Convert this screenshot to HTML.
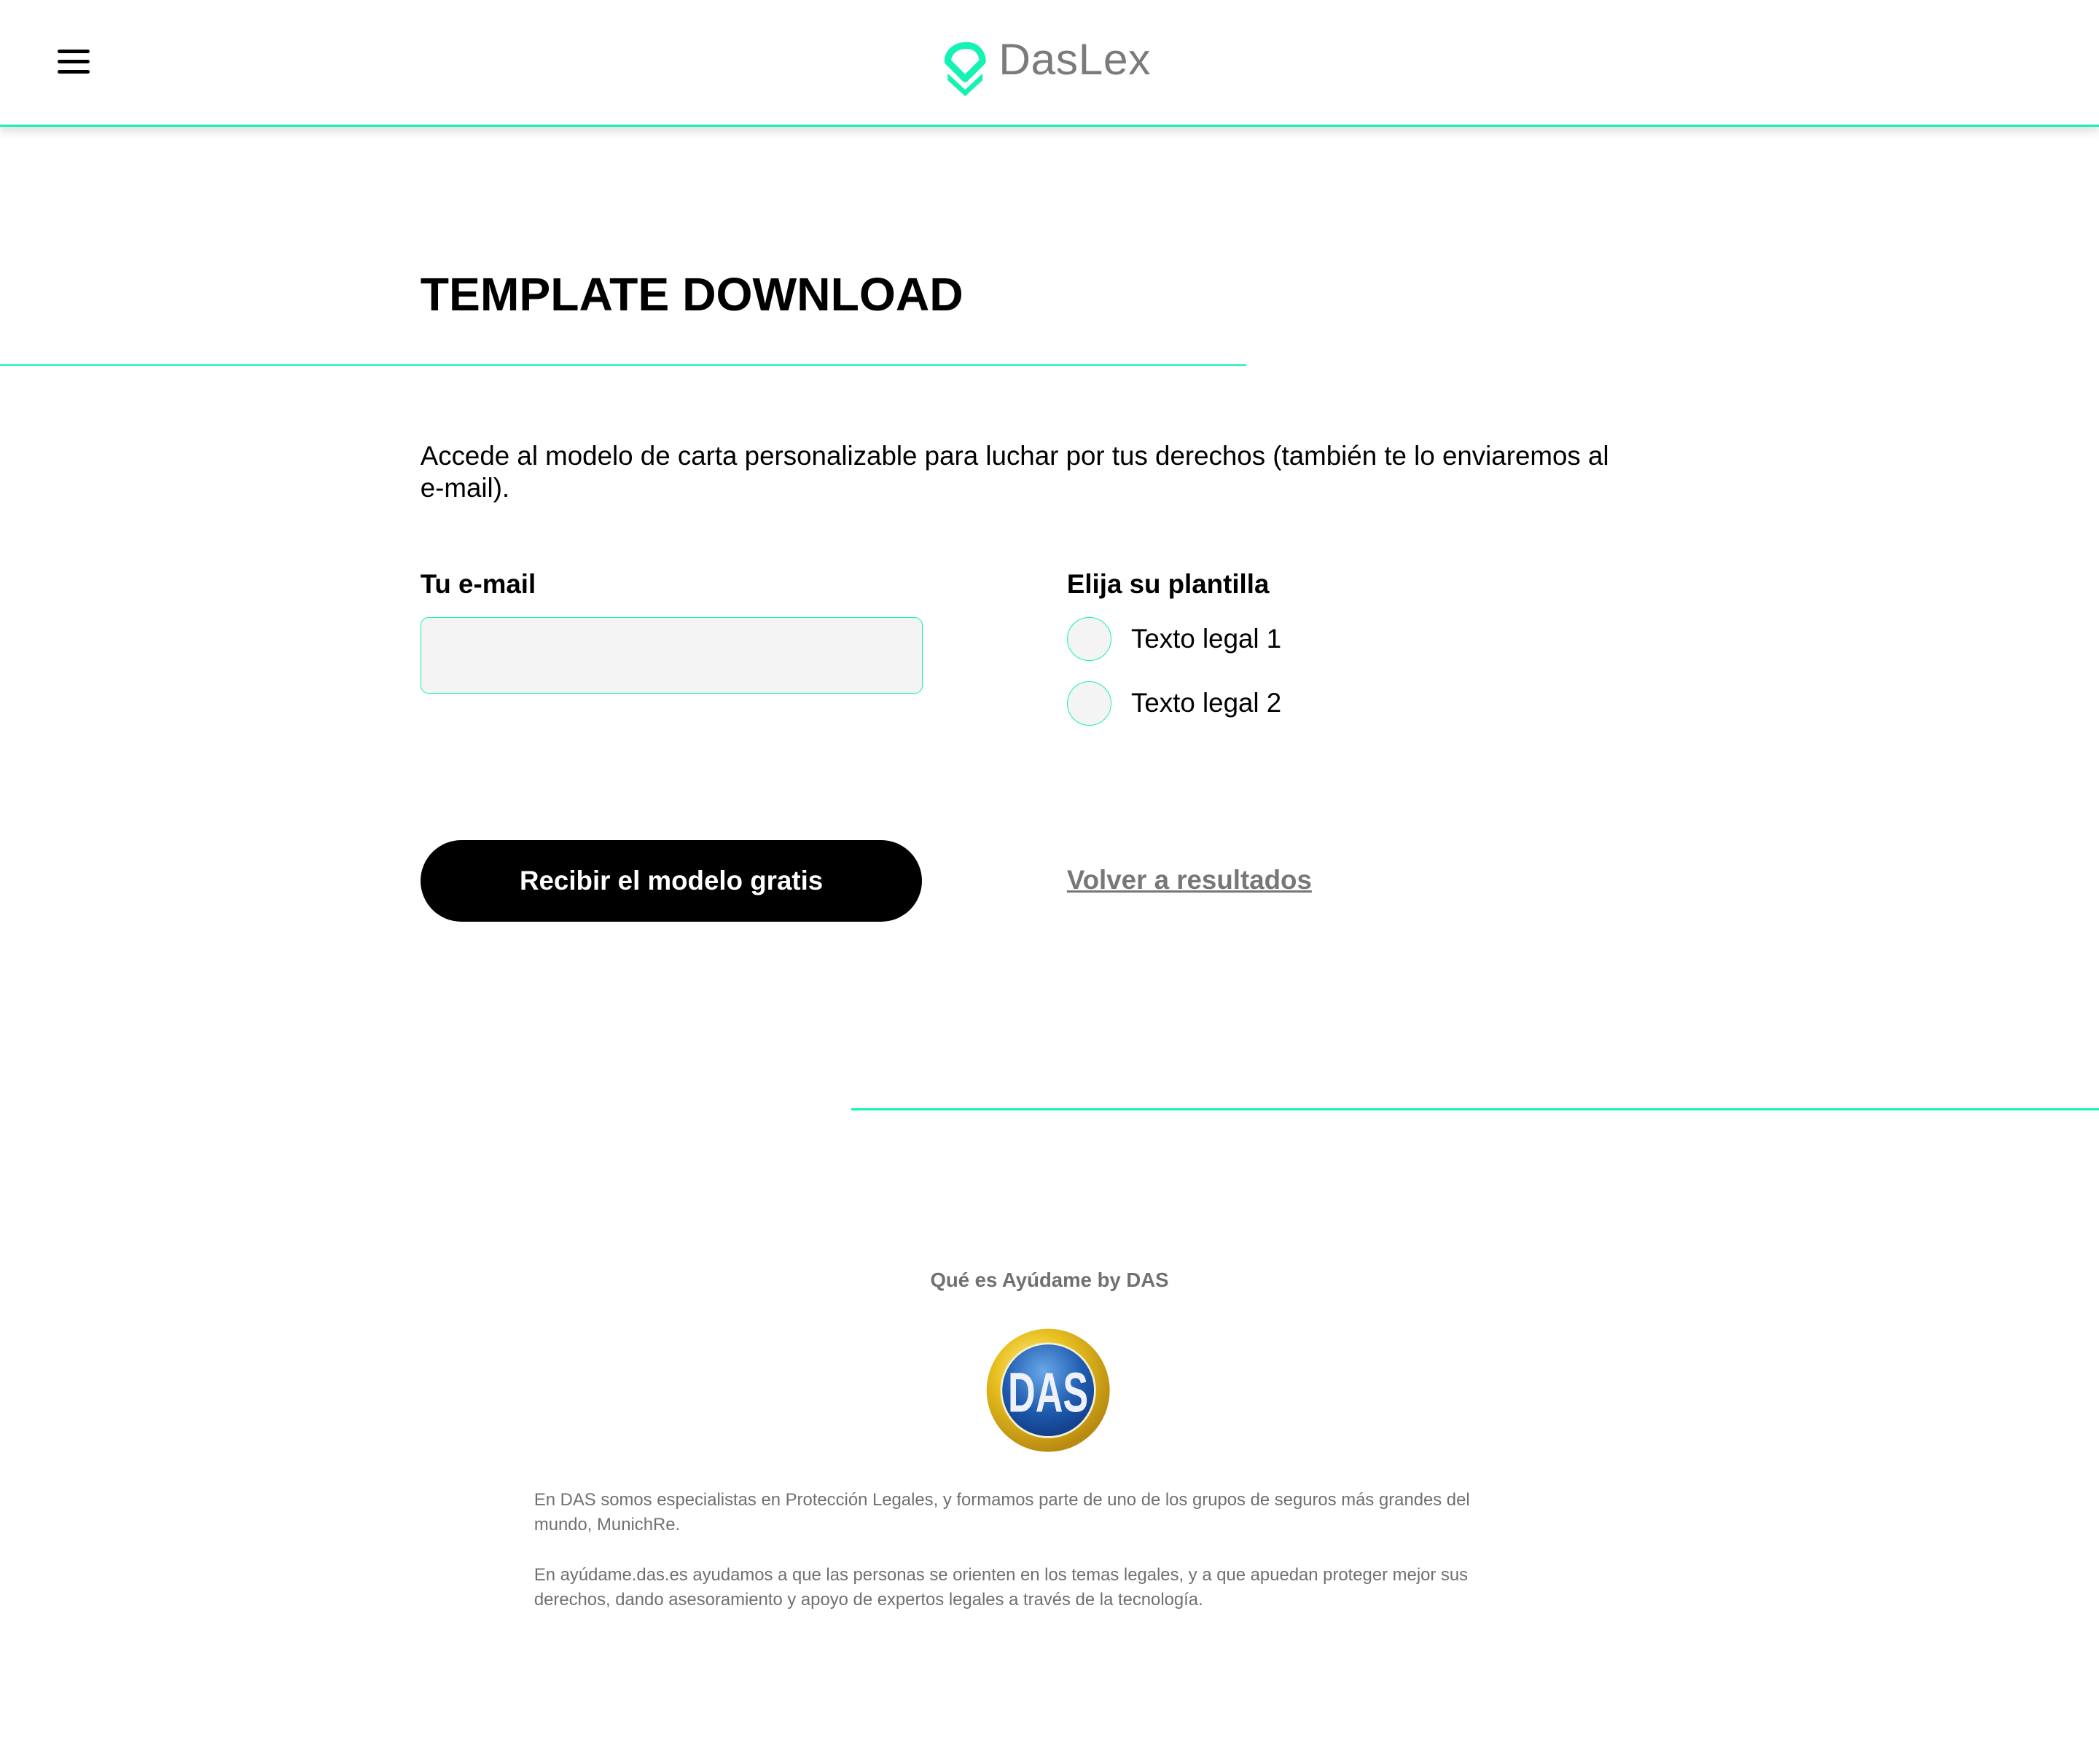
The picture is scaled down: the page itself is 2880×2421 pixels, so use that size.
<!DOCTYPE html>
<html><head><meta charset="utf-8"><style>
html,body{margin:0;padding:0;background:#fff;}
body{width:1568px;height:1318px;zoom:1.83673;position:relative;overflow:hidden;font-family:"Liberation Sans","DejaVu Sans",sans-serif;color:#000;}
.a{position:absolute;}
.hdr{left:0;top:0;width:1568px;height:93px;border-bottom:2px solid #14f2b4;box-shadow:0 4px 6px rgba(0,0,0,0.12);background:#fff;}
.ham{left:43px;width:24px;height:3px;border-radius:2px;background:#000;}
.line{height:1.5px;background:#14f2b4;}
.lbl{font-size:20px;font-weight:bold;}
.radio{width:32px;height:32px;border:1px solid #14f2b4;border-radius:50%;background:#f4f4f4;}
.opt{font-size:20px;}
.ft{left:399px;width:740px;font-size:13px;line-height:18.5px;color:#707070;}
</style></head><body>
<div class="a hdr"></div>
<div class="a ham" style="top:37px"></div>
<div class="a ham" style="top:44.5px"></div>
<div class="a ham" style="top:52px"></div>
<svg class="a" style="left:704px;top:30px" width="36" height="44" viewBox="0 0 36 44">
<path d="M18 4 C9 4 4 10 4 16 L17 29 L30 16 C30 10 26 4 18 4 Z" fill="none" stroke="#14f2b4" stroke-width="5" stroke-linejoin="round"/>
<path d="M4 25 L4 30 L17 42 L30 30 L30 25 L17 37 Z" fill="#14f2b4"/>
</svg>
<div class="a" style="left:746px;top:25px;font-size:33px;color:#7b7b7b;letter-spacing:0.3px;">DasLex</div>
<div class="a" style="left:314px;top:200px;font-size:35px;font-weight:bold;letter-spacing:0px;">TEMPLATE DOWNLOAD</div>
<div class="a line" style="left:0;top:272px;width:931px"></div>
<div class="a" style="left:314px;top:329px;width:940px;font-size:20px;line-height:24px;">Accede al modelo de carta personalizable para luchar por tus derechos (también te lo enviaremos al <span style="white-space:nowrap">e-mail).</span></div>
<div class="a lbl" style="left:314px;top:425px">Tu e-mail</div>
<div class="a" style="left:314px;top:461px;width:374px;height:56px;border:1px solid #14f2b4;border-radius:6px;background:#f4f4f4;"></div>
<div class="a lbl" style="left:797px;top:425px">Elija su plantilla</div>
<div class="a radio" style="left:797px;top:461px"></div>
<div class="a opt" style="left:845px;top:466px">Texto legal 1</div>
<div class="a radio" style="left:797px;top:509px"></div>
<div class="a opt" style="left:845px;top:514px">Texto legal 2</div>
<div class="a" style="left:314px;top:628px;width:375px;height:61px;border-radius:31px;background:#000;color:#fff;font-size:20px;font-weight:bold;text-align:center;line-height:61px;">Recibir el modelo gratis</div>
<div class="a" style="left:797px;top:646px;font-size:20px;font-weight:bold;color:#777;text-decoration:underline;">Volver a resultados</div>
<div class="a line" style="left:636px;top:828px;width:932px"></div>
<div class="a" style="left:0;width:1568px;text-align:center;top:948px;font-size:15px;font-weight:bold;color:#707070;">Qué es Ayúdame by DAS</div>
<svg class="a" style="left:735px;top:991px" width="96" height="96" viewBox="0 0 96 96">
<defs><radialGradient id="g" cx="40%" cy="35%" r="65%"><stop offset="0" stop-color="#fff3a0"/><stop offset="0.5" stop-color="#e8c020"/><stop offset="1" stop-color="#b88a10"/></radialGradient>
<radialGradient id="b" cx="45%" cy="30%" r="70%"><stop offset="0" stop-color="#6aa8e8"/><stop offset="0.6" stop-color="#1f5cb0"/><stop offset="1" stop-color="#123e88"/></radialGradient></defs>
<circle cx="48" cy="48" r="46" fill="url(#g)"/>
<circle cx="48" cy="48" r="35" fill="url(#b)" stroke="#f5f0d0" stroke-width="1.5"/>
<text x="48" y="64" text-anchor="middle" font-family="Liberation Sans Narrow,Liberation Sans,sans-serif" font-weight="bold" font-size="42" fill="#eef2f8" textLength="60" lengthAdjust="spacingAndGlyphs">DAS</text>
</svg>
<div class="a ft" style="top:1112px;width:725px">En DAS somos especialistas en Protección Legales, y formamos parte de uno de los grupos de seguros más grandes del mundo, MunichRe.</div>
<div class="a ft" style="top:1168px;width:740px">En ayúdame.das.es ayudamos a que las personas se orienten en los temas legales, y a que apuedan proteger mejor sus derechos, dando asesoramiento y apoyo de expertos legales a través de la tecnología.</div>
</body></html>
